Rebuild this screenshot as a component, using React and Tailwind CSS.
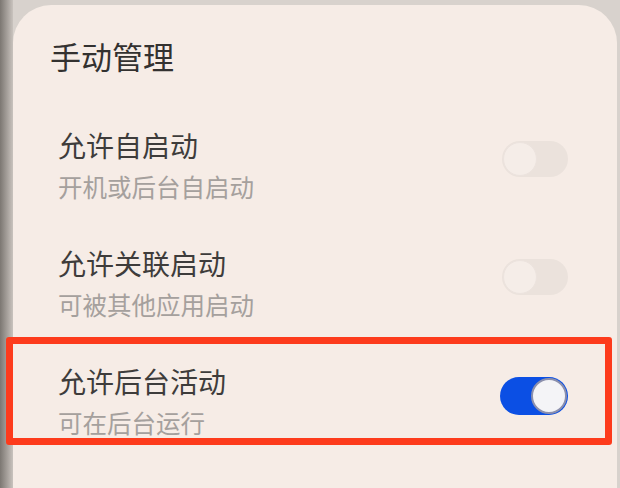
import React from 'react';

const rows = [
  { id: 1, title: '允许自启动', desc: '开机或后台自启动', on: false },
  { id: 2, title: '允许关联启动', desc: '可被其他应用启动', on: false },
  { id: 3, title: '允许后台活动', desc: '可在后台运行', on: true, marked: true },
];

const Toggle = ({ on }) =>
  on ? (
    <div className="w-[68px] h-[38px] rounded-full bg-[#0b4fe4] flex items-center justify-end p-[1px] shrink-0">
      <div className="w-[36px] h-[36px] rounded-full bg-[#f4f4f7] border-2 border-[#8c90ad]"></div>
    </div>
  ) : (
    <div className="w-[66px] h-[36px] rounded-full bg-[#ebe2dc] flex items-center p-[1px] shrink-0">
      <div className="w-[34px] h-[34px] rounded-full bg-[#f5ede8] border border-[#ece3de]"></div>
    </div>
  );

const App = () => {
  return (
    <div className="w-[620px] h-[488px] flex overflow-hidden bg-[#d8d2cd]" style={{ fontFamily: '"Noto Sans CJK SC", "Noto Sans", sans-serif' }}>
      <div className="w-[13px] h-full bg-gradient-to-r from-[#7c7772] to-[#c9c3be] shrink-0"></div>
      <div className="flex-1 pt-[5px] pr-[3px]">
        <div className="h-full bg-[#f6ece6] rounded-t-[38px] pt-[31px]">
          <h1 className="pl-[37px] text-[31px] leading-[40px] text-[#333130] font-normal">手动管理</h1>
          <div className="mt-[30px]">
            {rows.map((row) => (
              <div key={row.id} className="relative flex items-start justify-between pl-[45px] pr-[49px] py-[21px]">
                <div className="flex flex-col gap-[7px]">
                  <p className="text-[28px] leading-[37px] text-[#3e3c3b]">{row.title}</p>
                  <p className="text-[24.5px] leading-[32px] text-[#a5a09d]">{row.desc}</p>
                </div>
                <div className="mt-[14px]">
                  <Toggle on={row.on} />
                </div>
                {row.marked && (
                  <div className="absolute -left-[7px] right-[5px] -top-[5px] bottom-[15px] border-[7px] border-[#fd3b1c] rounded-[3px]"></div>
                )}
              </div>
            ))}
          </div>
        </div>
      </div>
    </div>
  );
};

export default App;
